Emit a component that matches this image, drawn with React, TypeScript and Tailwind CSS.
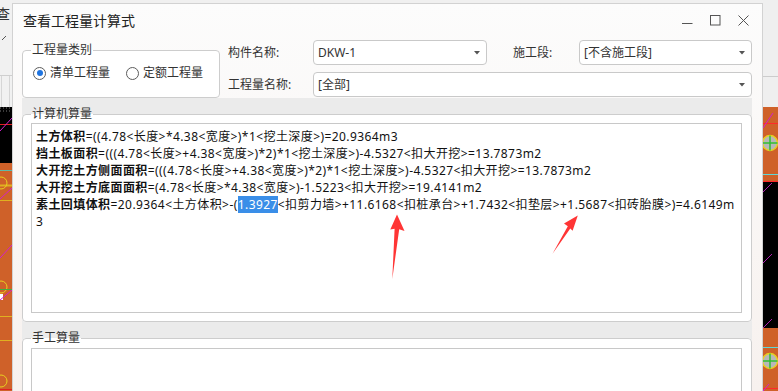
import React from "react";

const uiFont = "font-['Noto_Sans','Noto_Sans_CJK_SC',sans-serif]";

type Part = { t: string; b?: boolean; sel?: boolean };

const lines: Part[][] = [
  [{ t: "土方体积", b: true }, { t: "=((4.78<长度>*4.38<宽度>)*1<挖土深度>)=20.9364m3" }],
  [
    { t: "挡土板面积", b: true },
    { t: "=(((4.78<长度>+4.38<宽度>)*2)*1<挖土深度>)-4.5327<扣大开挖>=13.7873m2" },
  ],
  [
    { t: "大开挖土方侧面面积", b: true },
    { t: "=(((4.78<长度>+4.38<宽度>)*2)*1<挖土深度>)-4.5327<扣大开挖>=13.7873m2" },
  ],
  [{ t: "大开挖土方底面面积", b: true }, { t: "=(4.78<长度>*4.38<宽度>)-1.5223<扣大开挖>=19.4141m2" }],
  [
    { t: "素土回填体积", b: true },
    { t: "=20.9364<土方体积>-(" },
    { t: "1.3927", sel: true },
    { t: "<扣剪力墙>+11.6168<扣桩承台>+1.7432<扣垫层>+1.5687<扣砖胎膜>)=4.6149m" },
  ],
  [{ t: "3" }],
];

const Radio = ({ checked, label }: { checked?: boolean; label: string }) => (
  <span className="flex items-center gap-[4px]">
    <span className="flex h-[13px] w-[13px] items-center justify-center rounded-full border border-[#5c5c5c] bg-white">
      {checked && <span className="h-[6px] w-[6px] rounded-full bg-[#1f74e0]" />}
    </span>
    <span className="leading-[16px]">{label}</span>
  </span>
);

const Combo = ({ value, className }: { value: string; className: string }) => (
  <div
    className={`flex h-[25px] items-center justify-between rounded-[4px] border border-[#c9c9c9] bg-white pl-[4px] pr-[6px] text-[#333] ${className}`}
  >
    <span>{value}</span>
    <svg width="6" height="4" viewBox="0 0 6 4">
      <path d="M0 0h6L3 3.5z" fill="#555" />
    </svg>
  </div>
);

const LeftCanvas = () => (
  <svg width="12" height="391" className="shrink-0">
    <rect x="0" y="0" width="12" height="107" fill="#f1f1f1" />
    <text x="-4" y="19" fontSize="14" fill="#333" fontFamily="Noto Sans CJK SC">
      查
    </text>
    <path d="M2 40l4-4" stroke="#555" strokeWidth="1" />
    <line x1="0" y1="75.5" x2="12" y2="75.5" stroke="#cfcfcf" />
    <line x1="1.5" y1="76" x2="1.5" y2="107" stroke="#d6d6d6" />
    <line x1="9.5" y1="76" x2="9.5" y2="107" stroke="#d6d6d6" />
    <rect x="0" y="107" width="12" height="56" fill="#000" />
    <path d="M0 108h12M0 111h12" stroke="#777" strokeWidth="1" strokeDasharray="1 2" />
    <line x1="0" y1="124.5" x2="12" y2="124.5" stroke="#e02020" />
    <line x1="0" y1="131" x2="12" y2="118" stroke="#d020d0" />
    <rect x="0" y="163" width="12" height="228" fill="#cf6129" />
    <line x1="0" y1="170.5" x2="12" y2="170.5" stroke="#5fb8a8" />
    <line x1="0" y1="185.5" x2="12" y2="185.5" stroke="#e0b020" strokeWidth="2" />
    <line x1="0" y1="200.5" x2="12" y2="200.5" stroke="#e0b020" />
    <circle cx="1" cy="183" r="6" fill="none" stroke="#e8d020" />
    <line x1="0" y1="199" x2="12" y2="188" stroke="#d020d0" />
    <line x1="0" y1="258" x2="12" y2="245" stroke="#d020d0" />
    <circle cx="1" cy="287" r="6" fill="none" stroke="#e8d020" />
    <line x1="0" y1="289.5" x2="12" y2="289.5" stroke="#40b040" />
    <rect x="0" y="294" width="3" height="6" fill="#fff" />
    <line x1="0" y1="300" x2="12" y2="290" stroke="#d020d0" />
    <line x1="0" y1="316.5" x2="12" y2="316.5" stroke="#e0b020" />
    <line x1="0" y1="340.5" x2="12" y2="340.5" stroke="#e0b020" />
    <circle cx="1" cy="381" r="6" fill="none" stroke="#e8d020" />
    <line x1="0" y1="389.5" x2="12" y2="389.5" stroke="#e02020" />
  </svg>
);

const RightCanvas = () => (
  <svg width="15" height="391" className="shrink-0">
    <rect x="0" y="0" width="15" height="107" fill="#efefef" />
    <line x1="0" y1="76.5" x2="15" y2="76.5" stroke="#cccccc" />
    <rect x="0" y="107" width="15" height="75" fill="#cf6129" />
    <line x1="0" y1="123.5" x2="15" y2="123.5" stroke="#ff2a2a" />
    <line x1="0" y1="128" x2="10" y2="113" stroke="#d020d0" />
    <circle cx="7" cy="143" r="7.5" fill="#b8b8b8" stroke="#e8d020" strokeWidth="1.5" />
    <path d="M7 135.5v15M0 143h14.5" stroke="#30c030" strokeWidth="1.5" />
    <line x1="0" y1="174.5" x2="15" y2="174.5" stroke="#5fd8d8" />
    <line x1="0" y1="181.5" x2="15" y2="181.5" stroke="#ff2a2a" />
    <rect x="0" y="182" width="15" height="146" fill="#000" />
    <line x1="0" y1="192" x2="9" y2="183" stroke="#b020b0" />
    <line x1="0" y1="263" x2="9" y2="254" stroke="#b020b0" />
    <line x1="0" y1="328" x2="9" y2="319" stroke="#b020b0" />
    <rect x="0" y="328" width="15" height="63" fill="#cf6129" />
    <line x1="0" y1="347.5" x2="15" y2="347.5" stroke="#5fd8d8" />
    <circle cx="7" cy="361" r="7.5" fill="#b8b8b8" stroke="#e8d020" strokeWidth="1.5" />
    <path d="M7 353.5v15M0 361h14.5" stroke="#30c030" strokeWidth="1.5" />
    <line x1="0" y1="388.5" x2="15" y2="388.5" stroke="#ff2a2a" />
    <line x1="0" y1="391" x2="6" y2="384" stroke="#d020d0" />
  </svg>
);

const Arrows = () => (
  <svg className="pointer-events-none absolute left-0 top-0" width="778" height="391">
    <polygon
      points="397,214.5 404.5,231 399.2,229.2 392.3,279 394.6,228.8 390.3,229.5"
      fill="#ff3535"
    />
    <polygon
      points="577.8,215.5 564,223.5 567.8,226.3 552.5,253.8 570.3,228.6 572.6,230.8"
      fill="#ff3535"
    />
  </svg>
);

export default function App() {
  return (
    <div className={`relative flex h-[391px] w-[778px] items-start overflow-hidden bg-[#f0f0f0] text-[12px] text-[#333] ${uiFont}`}>
      <LeftCanvas />

      {/* dialog */}
      <div className="mt-[3px] flex h-[388px] w-[751px] shrink-0 flex-col border-x border-t border-[#d2d2d2] bg-linear-to-b from-[#fcfcfc] to-[#f7f1ee]">
        {/* title bar */}
        <div className="flex h-[36px] shrink-0 justify-between pl-[10px] pr-[13px]">
          <div className="pt-[7px] text-[14px] leading-[20px] text-[#222]">查看工程量计算式</div>
          <div className="flex items-start gap-[17px] pt-[11px]">
            <svg width="11" height="11" viewBox="0 0 11 11">
              <path d="M0 8.5h10.5" stroke="#555" />
            </svg>
            <svg width="11" height="11" viewBox="0 0 11 11">
              <rect x="0.5" y="0.5" width="9.5" height="9.5" fill="none" stroke="#555" />
            </svg>
            <svg width="11" height="11" viewBox="0 0 11 11">
              <path d="M0.5 0.5l10 10M10.5 0.5l-10 10" stroke="#555" />
            </svg>
          </div>
        </div>

        {/* filters */}
        <div className="flex h-[58px] shrink-0 pl-[9px]">
          <fieldset className="mt-[3px] h-[55px] w-[198px] rounded-[4px] border border-[#cdcdcd] bg-white pl-[8px]">
            <legend className="px-[1px] leading-[14px]">工程量类别</legend>
            <div className="ml-[2px] mt-[8px] flex gap-[16px]">
              <Radio checked label="清单工程量" />
              <Radio label="定额工程量" />
            </div>
          </fieldset>

          <div className="ml-[8px] flex flex-col gap-[7px]">
            <div className="flex items-center">
              <span className="w-[85px]">构件名称:</span>
              <Combo value="DKW-1" className="w-[174px]" />
              <span className="ml-[26px] w-[66px]">施工段:</span>
              <Combo value="[不含施工段]" className="w-[173px]" />
            </div>
            <div className="flex items-center">
              <span className="w-[85px]">工程量名称:</span>
              <Combo value="[全部]" className="w-[439px]" />
            </div>
          </div>
        </div>

        {/* result groups */}
        <div className="ml-[9px] flex w-[730px] flex-1 flex-col gap-[9px] bg-[#ebebeb] pt-[9px]">
          <fieldset className="h-[215px] shrink-0 rounded-[4px] border border-[#cdcdcd] bg-white pb-[8px] pl-[8px] pr-[9px]">
            <legend className="px-[1px] leading-[14px]">计算机算量</legend>
            <div className="mt-[2px] h-[190px] overflow-hidden border border-[#c8c8c8] bg-white pl-[4px] pt-[4px] tracking-[0.42px] text-[#111]">
              {lines.map((parts, i) => (
                <div key={i} className="whitespace-nowrap leading-[17px]">
                  {parts.map((p, j) => (
                    <span
                      key={j}
                      className={p.sel ? "bg-[#3a8ee8] text-white" : p.b ? "font-bold" : ""}
                    >
                      {p.t}
                    </span>
                  ))}
                </div>
              ))}
            </div>
          </fieldset>

          <fieldset className="h-[80px] shrink-0 rounded-[4px] border border-[#cdcdcd] bg-white pl-[8px] pr-[9px]">
            <legend className="px-[1px] leading-[14px]">手工算量</legend>
            <div className="mt-[3px] h-[60px] border border-[#c8c8c8] bg-white" />
          </fieldset>
        </div>
      </div>

      <RightCanvas />
      <Arrows />
    </div>
  );
}
